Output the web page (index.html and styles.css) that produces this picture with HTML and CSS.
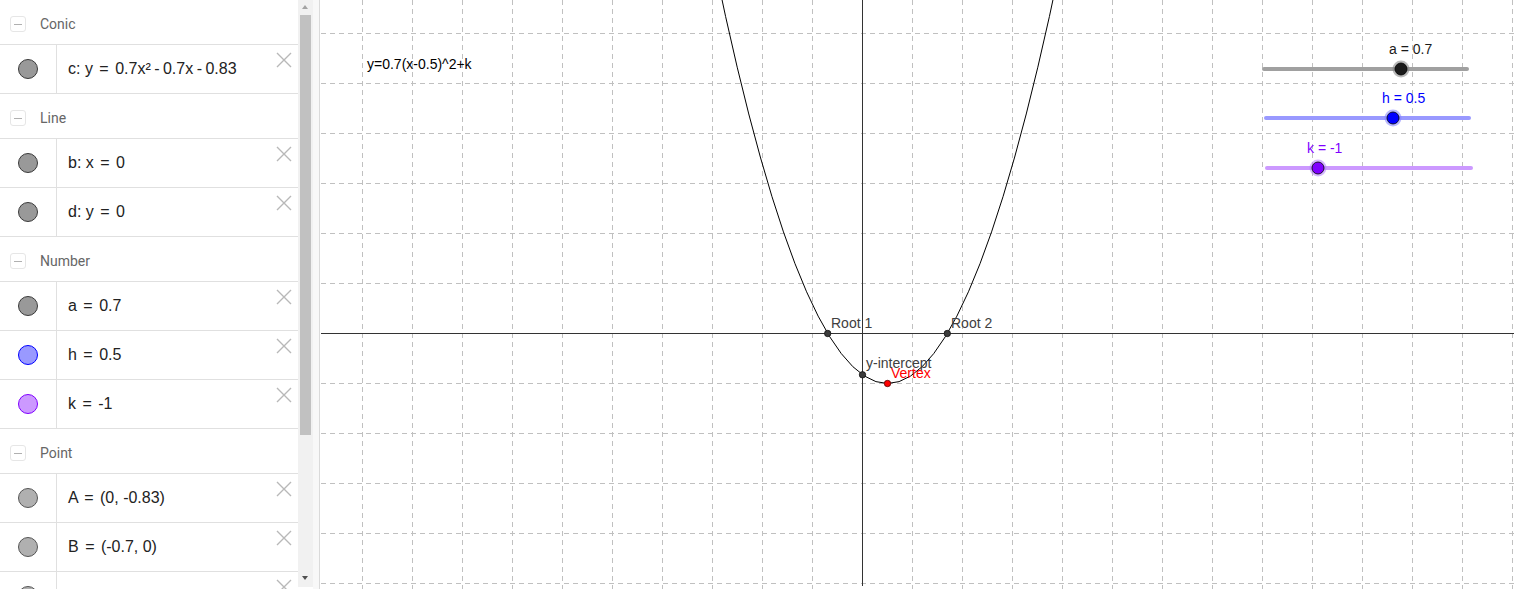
FILE: index.html
```html
<!DOCTYPE html>
<html>
<head>
<meta charset="utf-8">
<link rel="stylesheet" href="styles.css">
</head>
<body>
<div class="app">
  <div class="panel">
    <div class="group">
      <div class="header"><span class="collapse"><span class="minus"></span></span><span class="htext">Conic</span></div>
      <div class="items">
        <div class="row"><div class="marker"><span class="dot gray"></span></div><div class="text">c: y <span class="op">=</span> 0.7x² <span class="opn">-</span> 0.7x <span class="opn">-</span> 0.83</div><svg class="del" viewBox="0 0 16 16"><path d="M1 1L15 15M15 1L1 15"/></svg></div>
      </div>
    </div>
    <div class="group">
      <div class="header"><span class="collapse"><span class="minus"></span></span><span class="htext">Line</span></div>
      <div class="items">
        <div class="row"><div class="marker"><span class="dot gray"></span></div><div class="text">b: x <span class="op">=</span> 0</div><svg class="del" viewBox="0 0 16 16"><path d="M1 1L15 15M15 1L1 15"/></svg></div>
        <div class="row"><div class="marker"><span class="dot gray"></span></div><div class="text">d: y <span class="op">=</span> 0</div><svg class="del" viewBox="0 0 16 16"><path d="M1 1L15 15M15 1L1 15"/></svg></div>
      </div>
    </div>
    <div class="group">
      <div class="header"><span class="collapse"><span class="minus"></span></span><span class="htext">Number</span></div>
      <div class="items">
        <div class="row"><div class="marker"><span class="dot gray"></span></div><div class="text">a <span class="op">=</span> 0.7</div><svg class="del" viewBox="0 0 16 16"><path d="M1 1L15 15M15 1L1 15"/></svg></div>
        <div class="row"><div class="marker"><span class="dot blue"></span></div><div class="text">h <span class="op">=</span> 0.5</div><svg class="del" viewBox="0 0 16 16"><path d="M1 1L15 15M15 1L1 15"/></svg></div>
        <div class="row"><div class="marker"><span class="dot purple"></span></div><div class="text">k <span class="op">=</span> -1</div><svg class="del" viewBox="0 0 16 16"><path d="M1 1L15 15M15 1L1 15"/></svg></div>
      </div>
    </div>
    <div class="group">
      <div class="header"><span class="collapse"><span class="minus"></span></span><span class="htext">Point</span></div>
      <div class="items">
        <div class="row"><div class="marker"><span class="dot light"></span></div><div class="text">A <span class="op">=</span> (0, -0.83)</div><svg class="del" viewBox="0 0 16 16"><path d="M1 1L15 15M15 1L1 15"/></svg></div>
        <div class="row"><div class="marker"><span class="dot light"></span></div><div class="text">B <span class="op">=</span> (-0.7, 0)</div><svg class="del" viewBox="0 0 16 16"><path d="M1 1L15 15M15 1L1 15"/></svg></div>
        <div class="row"><div class="marker"><span class="dot light"></span></div><div class="text">C <span class="op">=</span> (1.7, 0)</div><svg class="del" viewBox="0 0 16 16"><path d="M1 1L15 15M15 1L1 15"/></svg></div>
      </div>
    </div>
  </div>
  <div class="scrollbar">
    <span class="arrow-up"></span>
    <span class="thumb"></span>
    <span class="arrow-down"></span>
  </div>
  <div class="gap"></div>
  <div class="divider"></div>
  <div class="graph">
    <svg class="canvas" width="1196" height="589" viewBox="320 0 1196 589">
      <g class="grid">
        <path d="M362.5 0V589M412.5 0V589M462.5 0V589M512.5 0V589M562.5 0V589M612.5 0V589M662.5 0V589M712.5 0V589M762.5 0V589M812.5 0V589M912.5 0V589M962.5 0V589M1012.5 0V589M1062.5 0V589M1112.5 0V589M1162.5 0V589M1212.5 0V589M1262.5 0V589M1312.5 0V589M1362.5 0V589M1412.5 0V589M1462.5 0V589M1512.5 0V589"/>
        <path d="M321 33.5H1516M321 83.5H1516M321 133.5H1516M321 183.5H1516M321 233.5H1516M321 283.5H1516M321 383.5H1516M321 433.5H1516M321 483.5H1516M321 533.5H1516M321 583.5H1516"/>
      </g>
      <path class="axis" d="M321 333.5H1514M862.5 0V586"/>
      <path class="curve" d="M702.5 -95.65Q887.5 862.65 1072.5 -95.65"/>
      <circle class="pt" cx="827.7" cy="333.5" r="3.2"/>
      <circle class="pt" cx="947.3" cy="333.5" r="3.2"/>
      <circle class="pt" cx="862.5" cy="374.8" r="3.2"/>
      <circle class="pt red" cx="887.5" cy="383.5" r="3.2"/>
      <text class="lbl" x="831" y="328">Root 1</text>
      <text class="lbl" x="951" y="328">Root 2</text>
      <text class="lbl" x="866" y="368">y-intercept</text>
      <text class="lbl vtx" x="891" y="378">Vertex</text>
      <text class="eq" x="367" y="69">y=0.7(x-0.5)^2+k</text>

      <text class="slabel sa" x="1389" y="54">a = 0.7</text>
      <line class="track ta" x1="1264" y1="69" x2="1467" y2="69"/>
      <circle class="halo ha" cx="1401" cy="69" r="8.5"/>
      <circle class="knob ka" cx="1401" cy="69" r="6"/>

      <text class="slabel sh" x="1382" y="103">h = 0.5</text>
      <line class="track th" x1="1266" y1="118" x2="1469" y2="118"/>
      <circle class="halo hh" cx="1393" cy="118" r="8.5"/>
      <circle class="knob kh" cx="1393" cy="118" r="6"/>

      <text class="slabel sk" x="1307" y="153">k = -1</text>
      <line class="track tk" x1="1267" y1="168" x2="1471" y2="168"/>
      <circle class="halo hk" cx="1318" cy="168" r="8.5"/>
      <circle class="knob kk" cx="1318" cy="168" r="6"/>
    </svg>
  </div>
</div>
</body>
</html>
```
FILE: styles.css
```css
html, body {
  margin: 0;
  padding: 0;
  background: #ffffff;
}
.app {
  display: flex;
  width: 1516px;
  height: 589px;
  overflow: hidden;
}
.panel {
  width: 298px;
  flex: none;
  height: 589px;
  overflow: hidden;
  background: #ffffff;
}
.header {
  height: 40px;
  padding-top: 4px;
  display: flex;
  align-items: center;
}
.collapse {
  width: 14px;
  height: 14px;
  margin-left: 10px;
  border: 1px solid #e6e6e6;
  border-radius: 3px;
  display: flex;
  align-items: center;
  justify-content: center;
}
.minus {
  width: 8px;
  height: 1px;
  background: #b0b0b0;
}
.htext {
  margin-left: 14px;
  font-family: Roboto, "Liberation Sans", sans-serif;
  font-size: 14px;
  color: #666666;
}
.items {
  border-bottom: 1px solid #e0e0e0;
}
.row {
  height: 48px;
  border-top: 1px solid #e0e0e0;
  display: flex;
  align-items: stretch;
}
.marker {
  width: 56px;
  border-right: 1px solid #e0e0e0;
  display: flex;
  align-items: center;
  justify-content: center;
}
.dot {
  width: 18px;
  height: 18px;
  border-radius: 50%;
  box-sizing: content-box;
  border: 1px solid #444444;
}
.dot.gray { background: #999999; border-color: #3a3a3a; }
.dot.light { background: #b0b0b0; border-color: #555555; }
.dot.blue { background: #9999ff; border-color: #0000ff; }
.dot.purple { background: #cc99ff; border-color: #7f00ff; }
.text {
  flex: 1;
  padding-left: 11px;
  display: flex;
  align-items: center;
  font-family: "Liberation Sans", Arial, sans-serif;
  font-size: 16px;
  color: #222222;
  white-space: pre;
}
.op {
  margin: 0 2px;
}
.opn {
  margin: 0 -1px;
}
.del {
  width: 16px;
  height: 16px;
  margin-top: 7px;
  margin-right: 6px;
  flex: none;
  fill: none;
  stroke: #b8b8b8;
  stroke-width: 1.4;
}
.scrollbar {
  width: 15px;
  height: 587px;
  flex: none;
  background: #f1f1f1;
  position: relative;
}
.thumb {
  position: absolute;
  left: 2px;
  top: 15px;
  width: 11px;
  height: 420px;
  background: #c1c1c1;
}
.arrow-up {
  position: absolute;
  left: 4px;
  top: 5px;
  width: 0;
  height: 0;
  border-left: 3.5px solid transparent;
  border-right: 3.5px solid transparent;
  border-bottom: 4px solid #a3a3a3;
}
.arrow-down {
  position: absolute;
  left: 4px;
  top: 576px;
  width: 0;
  height: 0;
  border-left: 3.5px solid transparent;
  border-right: 3.5px solid transparent;
  border-top: 4px solid #505050;
}
.gap {
  width: 6px;
  flex: none;
  background: #f8f8f8;
}
.divider {
  width: 1px;
  flex: none;
  background: #dadada;
}
.graph {
  flex: 1;
  height: 589px;
  overflow: hidden;
}
.canvas {
  display: block;
}
.grid path {
  fill: none;
  stroke: #c0c0c0;
  stroke-width: 1;
  stroke-dasharray: 5 4;
}
.axis {
  fill: none;
  stroke: #333333;
  stroke-width: 1;
}
.curve {
  fill: none;
  stroke: #000000;
  stroke-width: 1;
}
.pt {
  fill: #3c3c3c;
  stroke: #111111;
  stroke-width: 0.8;
}
.pt.red {
  fill: #ff0000;
  stroke: #550000;
}
.lbl {
  font-family: "Liberation Sans", Arial, sans-serif;
  font-size: 14px;
  fill: #404040;
}
.lbl.vtx {
  fill: #ff0000;
}
.eq {
  font-family: "Liberation Sans", Arial, sans-serif;
  font-size: 14px;
  fill: #000000;
}
.slabel {
  font-family: "Liberation Sans", Arial, sans-serif;
  font-size: 14px;
}
.sa { fill: #1a1a1a; }
.sh { fill: #0000ff; }
.sk { fill: #7f00ff; }
.track {
  stroke-width: 4;
  stroke-linecap: round;
}
.ta { stroke: #a0a0a0; }
.th { stroke: #9999ff; }
.tk { stroke: #cc99ff; }
.halo { opacity: 0.55; }
.ha { fill: #808080; }
.hh { fill: #8080ff; }
.hk { fill: #b280ff; }
.knob {
  stroke: #000000;
  stroke-width: 0.8;
}
.ka { fill: #1a1a1a; }
.kh { fill: #0000ff; }
.kk { fill: #7f00ff; }
```
